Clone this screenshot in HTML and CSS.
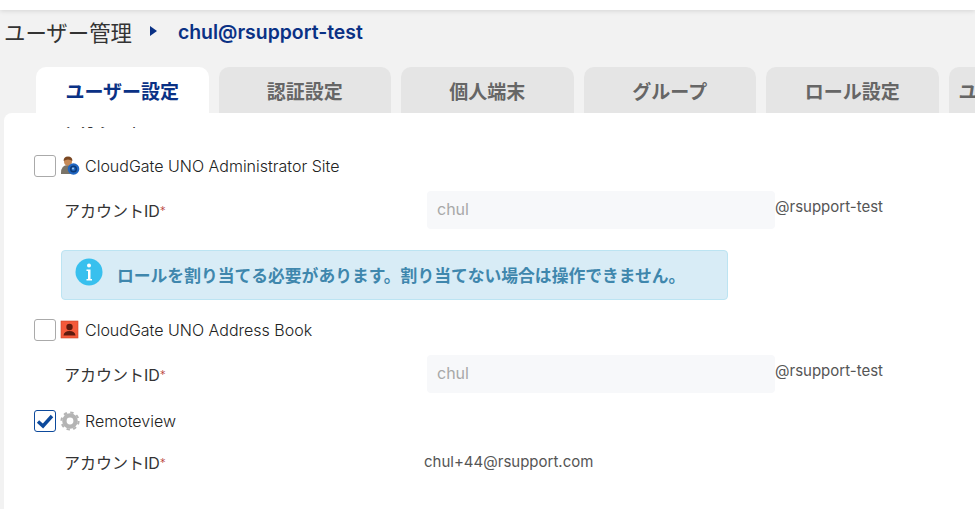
FILE: index.html
```html
<!DOCTYPE html>
<html lang="ja">
<head>
  <meta charset="UTF-8" />
  <title>ユーザー管理</title>
  <link rel="stylesheet" href="styles.css">
</head>
<body>
  <div class="topbar"></div>
  <div class="breadcrumb">
    <span class="crumb-root">ユーザー管理</span>
    <span class="crumb-arrow"></span>
    <span class="crumb-current">chul@rsupport-test</span>
  </div>
  <div class="tabs">
    <div class="tab active">ユーザー設定</div>
    <div class="tab">認証設定</div>
    <div class="tab">個人端末</div>
    <div class="tab">グループ</div>
    <div class="tab">ロール設定</div>
    <div class="tab last">ユ</div>
  </div>
  <div class="panel">
    <div class="scroller">
      <div class="field clipped">
        <span class="field-label">アカウントID</span>
        <span class="field-value">chul@rsupport.com</span>
      </div>

      <div class="app-row first">
        <span class="check"></span>
        <svg class="app-icon" viewBox="0 0 20 20">
          <path d="M1 17 Q1 9 8 9 Q12 9 14 13 L11 18 H1Z" fill="#7b7468"/>
          <circle cx="8" cy="5.5" r="4" fill="#c68a58"/>
          <path d="M3.6 5 Q3.5 .5 8 .5 Q12.5 .5 12.4 5 Q8 2 3.6 5Z" fill="#7a4722"/>
          <circle cx="13.5" cy="13" r="5.8" fill="#1f66c2"/>
          <circle cx="13.5" cy="13" r="2.8" fill="none" stroke="#0c3a78" stroke-width="1.5"/>
          <circle cx="13" cy="12.5" r="1" fill="#a9d0f2"/>
        </svg>
        <span class="app-name">CloudGate UNO Administrator Site</span>
      </div>
      <div class="field">
        <span class="field-label">アカウントID<em>*</em></span>
        <span class="input">chul</span>
        <span class="domain">@rsupport-test</span>
      </div>
      <div class="notice">
        <svg class="notice-icon" viewBox="0 0 28 28">
          <circle cx="14" cy="14" r="13.5" fill="#38c0ee"/>
          <circle cx="14" cy="7.5" r="2" fill="#fff"/>
          <path d="M11.5 11.5 H15.5 V21 H17 V22.5 H11.5 V21 H13 V13 H11.5Z" fill="#fff"/>
        </svg>
        <span>ロールを割り当てる必要があります。割り当てない場合は操作できません。</span>
      </div>

      <div class="app-row second">
        <span class="check"></span>
        <svg class="app-icon" viewBox="0 0 20 20">
          <rect x="1" y="1" width="17" height="17" fill="#f4593a" stroke="#c9452b" stroke-width=".6"/>
          <circle cx="9.5" cy="7" r="3.2" fill="#5e1a0e"/>
          <path d="M3.5 15.5 Q4 11 9.5 11 Q15 11 15.5 15.5Z" fill="#5e1a0e"/>
        </svg>
        <span class="app-name">CloudGate UNO Address Book</span>
      </div>
      <div class="field">
        <span class="field-label">アカウントID<em>*</em></span>
        <span class="input">chul</span>
        <span class="domain">@rsupport-test</span>
      </div>

      <div class="app-row third">
        <span class="check checked">
          <svg viewBox="0 0 20 20"><path d="M3 10.5 L8 15 L17 5" fill="none" stroke="#0d4a9c" stroke-width="3.4"/></svg>
        </span>
        <svg class="app-icon" viewBox="0 0 20 20">
          <circle cx="10" cy="10" r="5.6" fill="none" stroke="#b4b4b4" stroke-width="4.4"/>
          <circle cx="10" cy="10" r="8.6" fill="none" stroke="#b4b4b4" stroke-width="2" stroke-dasharray="3.4 3.35"/>
        </svg>
        <span class="app-name">Remoteview</span>
      </div>
      <div class="field plain">
        <span class="field-label">アカウントID<em>*</em></span>
        <span class="field-value">chul+44@rsupport.com</span>
      </div>
    </div>
  </div>
</body>
</html>
```

FILE: styles.css
```css
* {
  box-sizing: border-box;
}
html, body {
  height: 100%;
}
body {
  margin: 0;
  background: #f2f2f2;
  overflow: hidden;
  font-family: Inter, "Noto Sans CJK JP", sans-serif;
  color: #333;
}
.topbar {
  height: 10px;
  background: #fff;
  box-shadow: 0 1px 5px rgba(0,0,0,0.12);
}
.breadcrumb {
  height: 57px;
  padding: 0 0 14px 4px;
  display: flex;
  align-items: center;
  white-space: nowrap;
}
.crumb-root {
  font-size: 21.4px;
  color: #333;
}
.crumb-arrow {
  width: 0;
  height: 0;
  margin: -2px 21px 0 18px;
  border-left: 7px solid #0a3185;
  border-top: 5px solid transparent;
  border-bottom: 5px solid transparent;
}
.crumb-current {
  font-size: 19.4px;
  font-weight: 600;
  color: #0a3185;
}
.tabs {
  display: flex;
  gap: 10px;
  height: 46px;
  padding-left: 36px;
  white-space: nowrap;
}
.tab {
  flex: 0 0 172.5px;
  background: #e5e5e5;
  border-radius: 10px 10px 0 0;
  text-align: center;
  line-height: 51px;
  font-size: 19px;
  font-weight: 700;
  color: #666;
}
.tab.active {
  background: #fff;
  color: #0a3185;
}
.tab.last {
  padding-left: 10px;
  text-align: left;
}
.panel {
  margin-left: 4px;
  height: 396px;
  background: #fff;
  border-radius: 8px 0 0 0;
  padding-top: 14px;
}
.scroller {
  height: 100%;
  overflow: hidden;
  padding-left: 30px;
  font-size: 15px;
}
.field {
  display: flex;
  align-items: center;
  height: 38px;
  padding-left: 30px;
}
.field.clipped {
  margin-top: -26px;
}
.field.clipped .field-value {
  margin-top: -6px;
}
.field-label {
  flex: 0 0 363px;
  font-size: 16px;
}
.field-label em {
  color: #b8433a;
  font-style: normal;
  font-size: 12px;
  font-weight: 300;
  vertical-align: 2px;
}
.field.plain .field-label,
.field.clipped .field-label {
  flex-basis: 360px;
}
.field-value {
  color: #555;
  font-size: 15px;
  margin-top: -2px;
}
.input {
  flex: 0 0 348px;
  height: 38px;
  line-height: 36px;
  padding-left: 10px;
  background: #f7f8fa;
  border-radius: 4px;
  font-size: 16px;
  color: #a8a8a8;
}
.domain {
  color: #555;
  font-size: 15px;
  margin-top: -8px;
}
.app-row {
  display: flex;
  align-items: center;
  height: 22px;
}
.app-row.first {
  margin-top: 16px;
  margin-bottom: 14px;
}
.app-row.second {
  margin-top: 19px;
  margin-bottom: 14px;
}
.app-row.third {
  margin-top: 17px;
  margin-bottom: 11px;
}
.check {
  width: 22px;
  height: 22px;
  border: 1px solid #aaa;
  border-radius: 3px;
  background: #fff;
  flex: none;
}
.check.checked {
  border-color: #0d4a9c;
}
.check svg {
  display: block;
  width: 20px;
  height: 20px;
}
.app-icon {
  width: 20px;
  height: 20px;
  margin: 0 5px 0 4px;
  flex: none;
}
.app-name {
  font-size: 16px;
  font-weight: 300;
  color: #222;
}
.notice {
  display: flex;
  align-items: center;
  gap: 14px;
  width: 667px;
  height: 50px;
  margin: 21px 0 0 27px;
  padding: 0 0 0 13px;
  background: #d8ecf6;
  border: 1px solid #bce4f2;
  border-radius: 4px;
  font-size: 16.8px;
  font-weight: 700;
  color: #3f87ad;
  white-space: nowrap;
}
.notice-icon {
  width: 28px;
  height: 28px;
  flex: none;
  margin-top: -6px;
}
```
